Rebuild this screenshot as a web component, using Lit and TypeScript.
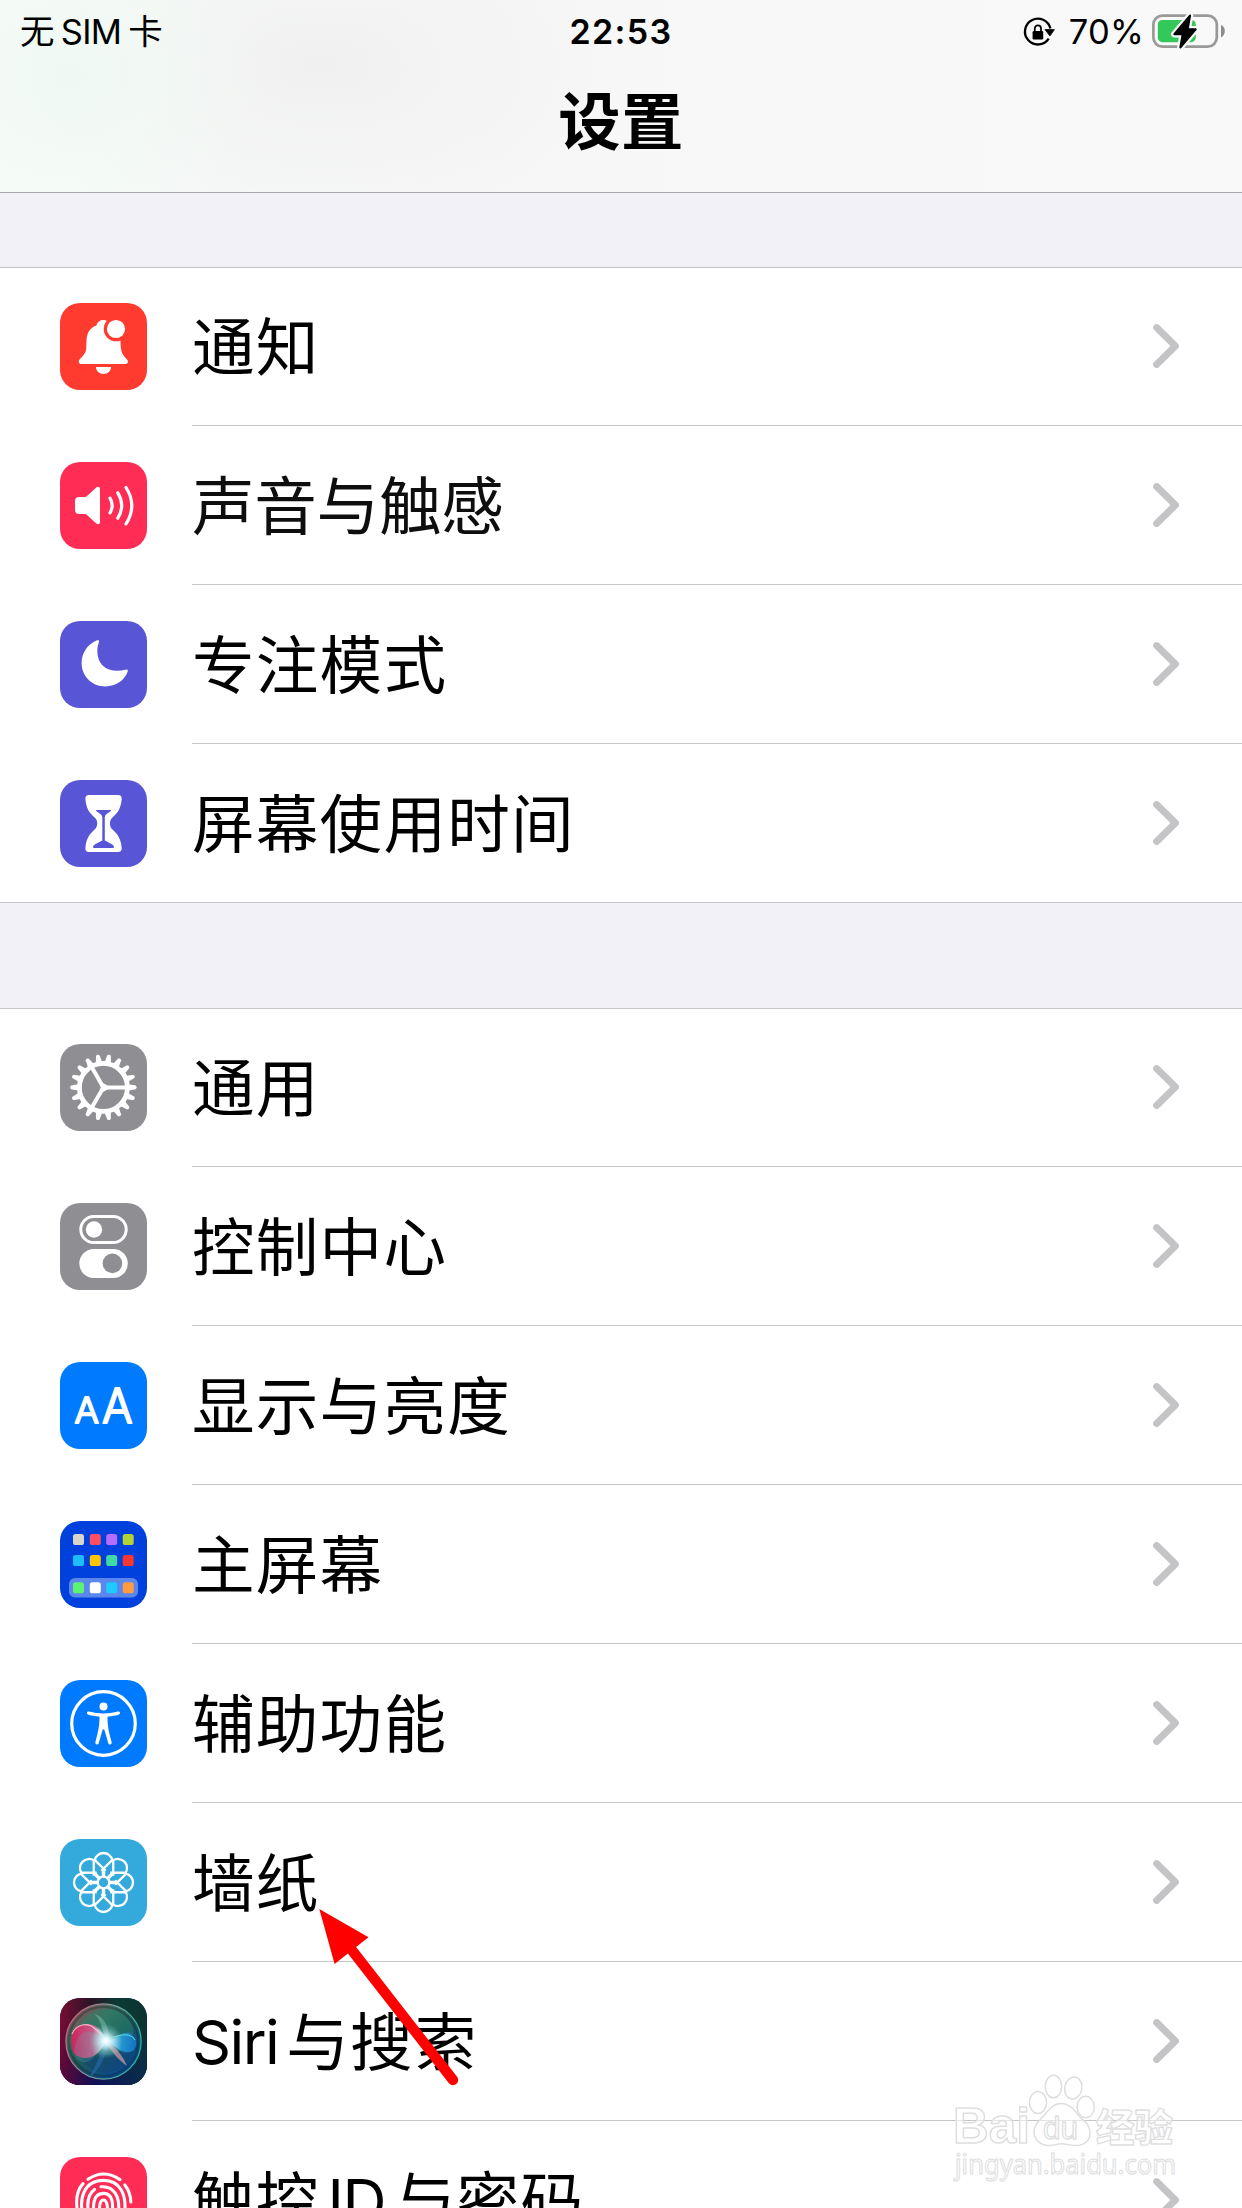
import { LitElement, html, svg, css, nothing, TemplateResult, SVGTemplateResult } from "lit";
import { customElement, property } from "lit/decorators.js";
import { classMap } from "lit/directives/class-map.js";

type Part = { text: string; latin?: boolean };
type Item = { icon: string; label: Part[]; tight?: boolean };

const t = (text: string): Part[] => [{ text }];

const GROUPS: Item[][] = [
  [
    { icon: "bell", label: t("通知") },
    { icon: "sound", label: t("声音与触感"), tight: true },
    { icon: "focus", label: t("专注模式") },
    { icon: "hourglass", label: t("屏幕使用时间") },
  ],
  [
    { icon: "gear", label: t("通用") },
    { icon: "control", label: t("控制中心") },
    { icon: "display", label: t("显示与亮度") },
    { icon: "home", label: t("主屏幕") },
    { icon: "access", label: t("辅助功能") },
    { icon: "wallpaper", label: t("墙纸") },
    { icon: "siri", label: [{ text: "Siri", latin: true }, { text: "与搜索" }] },
    { icon: "touch", label: [{ text: "触控" }, { text: "ID", latin: true }, { text: "与密码" }] },
  ],
];

const range = (n: number) => Array.from({ length: n }, (_, i) => i);

const TILE: Record<string, string> = {
  bell: "#ff3b30",
  sound: "#ff2d55",
  focus: "#5856d6",
  hourglass: "#5856d6",
  gear: "#8e8e93",
  control: "#8e8e93",
  display: "#007aff",
  home: "#0040dd",
  access: "#007aff",
  wallpaper: "#34aadc",
  siri: "#12203a",
  touch: "#ff2d55",
};

const HOME_DOTS = [
  ["#d9d5cc", "#ff4f64", "#b56dff", "#b2d235"],
  ["#1cbffa", "#ffc400", "#40d9a3", "#fb362e"],
  ["#5cf272", "#ffffff", "#1dcbff", "#ff9c40"],
];

const GLYPH: Record<string, () => SVGTemplateResult> = {
  bell: () => svg`
    <path fill="#fff" d="M21.5 61C18.6 61 18 58.2 19.8 56.2C23.5 52.2 25.8 50 26.2 46C26.8 39 25.6 33 29.5 27.5C31.5 24.6 34 23.3 36.4 22.4C37.4 19 40 17 43.3 17C46.6 17 49.3 19 50.3 22.4C57.5 25 60.3 31 60.5 38C60.7 48 61.5 51 66.8 56.2C68.8 58.2 68.2 61 65.2 61Z"/>
    <circle cx="56" cy="26" r="12.3" fill="#ff3b30"/>
    <circle cx="56" cy="26" r="9.1" fill="#fff"/>
    <path fill="#fff" d="M36 64H51C51 68 47.8 71 43.5 71S36 68 36 64Z"/>`,
  sound: () => svg`
    <path fill="#fff" d="M19 35H24.5C25.6 35 26.3 34.6 27 34L36.3 25.5C37.8 24.2 40 24.8 40 27V60C40 62.2 37.8 62.9 36.3 61.5L27 53C26.3 52.3 25.6 52 24.5 52H19C16.5 52 15 50.5 15 48V39C15 36.5 16.5 35 19 35Z"/>
    <g fill="none" stroke="#fff" stroke-width="3.2" stroke-linecap="round">
      <path d="M50 36.2Q54.4 43.5 50 50.8"/>
      <path d="M57.8 30.8Q65.6 43.5 57.8 56.2"/>
      <path d="M66 25.5Q77.6 43.5 66 62"/>
    </g>`,
  focus: () => svg`
    <path fill="#fff" d="M36.5 19.6C27.5 23.4 21.6 32 21.6 42C21.6 55.4 32 65.4 45.4 65.4C55.8 65.4 64.5 59.6 67.7 50.6C68.2 49 67 48.2 65.5 48.7C50 52.6 37.3 46 37.3 30C37.3 26.6 38 23.6 38.9 21.2C39.5 19.4 38.4 18.8 36.5 19.6Z"/>`,
  hourglass: () => svg`
    <path fill="#fff" d="M29 15H58C60.6 15 61.9 16.6 61.7 19C61 28.5 57.5 33 52.5 37.5C50.5 39.3 50 41.2 50 43.5S50.5 47.7 52.5 49.5C57.5 54 61 58.5 61.7 68C61.9 70.4 60.6 72 58 72H29C26.4 72 25.2 70.4 25.4 68C26 58.5 29.6 54 34.6 49.5C36.6 47.7 37.2 45.8 37.2 43.5S36.6 39.3 34.6 37.5C29.6 33 26 28.5 25.4 19C25.2 16.6 26.4 15 29 15Z"/>
    <path fill="#5856d6" d="M36 30H51C51.4 32.4 44.8 33 44.8 37.5V60.5L51.5 64C53.3 65 54 66 54 67.3C54 68 53.4 68 52.5 68H34.5C33.6 68 33 68 33 67.3C33 66 33.8 65 35.6 64L42.3 60.5V37.5C42.3 33 35.6 32.4 36 30Z"/>`,
  gear: () => svg`
    <g fill="#fff">
      ${range(18).map(
        (i) => svg`<path transform="rotate(${i * 20} 43.4 43.4)" d="M75.8 41.6L76.8 43.4L75.8 45.2L67.5 46.8V40Z"/>`
      )}
    </g>
    <circle cx="43.4" cy="43.4" r="24" fill="none" stroke="#fff" stroke-width="4.8"/>
    <g stroke="#fff" stroke-width="4">
      <path d="M43.4 43.4H66M43.4 43.4L32.1 23.8M43.4 43.4L32.1 63" />
    </g>
    <path fill="#fff" d="M47.5 41.4V45.4L43.1 47.9L39.6 45.9L41 43.4L39.6 40.9L43.1 38.9Z"/>`,
  control: () => svg`
    <rect x="20.8" y="13.5" width="45.4" height="26" rx="13" fill="none" stroke="#fff" stroke-width="3"/>
    <circle cx="34" cy="26.5" r="8.2" fill="#fff"/>
    <rect x="19.3" y="46" width="48.5" height="29" rx="14.5" fill="#fff"/>
    <circle cx="52.4" cy="60.4" r="9.8" fill="#8e8e93"/>`,
  display: () => svg`
    <g class="letters">
      <text x="14.6" y="60.8" font-size="36" textLength="24.4" lengthAdjust="spacingAndGlyphs">A</text>
      <text x="42" y="60.8" font-size="47.5" textLength="30.6" lengthAdjust="spacingAndGlyphs">A</text>
    </g>`,
  home: () => svg`
    <rect x="9" y="57" width="69" height="19.6" rx="6" fill="#5b86ec"/>
    ${HOME_DOTS.map((row, r) =>
      row.map(
        (c, i) => svg`<rect x=${[13, 29.8, 46.2, 62.7][i]} y=${[13, 34, 61.3][r]} width="11" height="11" rx="2.6" fill=${c}/>`
      )
    )}`,
  access: () => svg`
    <circle cx="43.5" cy="43.5" r="31.8" fill="none" stroke="#fff" stroke-width="3.2"/>
    <circle cx="43.5" cy="26.5" r="4" fill="#fff"/>
    <path fill="#fff" d="M29 31.6C34 33 38.5 33.4 43.5 33.4S53 33 58 31.6C60.2 31 60.9 34 58.6 34.7C55 35.7 52 36.1 48.4 36.4C47.6 36.5 47.5 37 47.5 37.8C47.6 48 49.5 54 51.6 62C52.3 64.7 49 65.6 48.2 63L44.6 50.4C44.2 49 42.8 49 42.4 50.4L38.8 63C38 65.6 34.7 64.7 35.4 62C37.5 54 39.4 48 39.5 37.8C39.5 37 39.4 36.5 38.6 36.4C35 36.1 32 35.7 28.4 34.7C26.1 34 26.8 31 29 31.6Z"/>`,
  wallpaper: () => svg`
    <g fill="none" stroke="#fff" stroke-width="2.3">
      ${range(8).map(
        (i) => svg`<g transform="rotate(${i * 45} 43.5 43.5)">
          <path d="M34.6 21.2A9.1 9.1 0 0 1 52.4 21.2"/>
          <path d="M34.4 20.6L45.6 31.8M52.6 20.6L41.4 31.8"/>
          <path stroke-width="3.4" d="M43.500 30V37.500"/>
        </g>`
      )}
      <circle cx="43.5" cy="43.5" r="5.8"/>
    </g>`,
  siri: () => svg`
    <defs>
      <linearGradient id="sa" x1="0" y1="0" x2="1" y2="0"><stop offset="0" stop-color="#780c34"/><stop offset=".35" stop-color="#2c1426"/><stop offset=".65" stop-color="#0b3a35"/><stop offset="1" stop-color="#0c342f"/></linearGradient>
      <linearGradient id="sb" x1="0" y1="0" x2="1" y2="0"><stop offset="0" stop-color="#5a0838"/><stop offset=".4" stop-color="#101058"/><stop offset="1" stop-color="#0a2c50"/></linearGradient>
      <linearGradient id="sm" x1="0" y1="0" x2="0" y2="1"><stop offset=".3" stop-color="#000"/><stop offset="1" stop-color="#fff"/></linearGradient>
      <mask id="mk"><rect width="87" height="87" fill="url(#sm)"/></mask>
      <linearGradient id="so" x1=".1" y1=".1" x2=".75" y2=".9"><stop offset="0" stop-color="#8d5058"/><stop offset=".3" stop-color="#3f6c60"/><stop offset=".55" stop-color="#20585a"/><stop offset="1" stop-color="#0c4a92"/></linearGradient>
      <linearGradient id="sr" x1="0" y1=".3" x2="1" y2=".6"><stop offset="0" stop-color="#c8607c"/><stop offset=".5" stop-color="#7d9f9a"/><stop offset="1" stop-color="#26b596"/></linearGradient>
      <radialGradient id="sg"><stop offset="0" stop-color="#fff"/><stop offset=".25" stop-color="#e8fbff" stop-opacity=".95"/><stop offset="1" stop-color="#8adfe8" stop-opacity="0"/></radialGradient>
      <linearGradient id="sp" x1="0" y1="0" x2="1" y2="0"><stop offset="0" stop-color="#e8185c"/><stop offset=".6" stop-color="#e0588c"/><stop offset="1" stop-color="#fff"/></linearGradient>
      <linearGradient id="sc" x1="0" y1="0" x2="1" y2="0"><stop offset="0" stop-color="#d8f8ff"/><stop offset=".5" stop-color="#249ce0"/><stop offset="1" stop-color="#1479cc"/></linearGradient>
    </defs>
    <rect width="87" height="87" fill="url(#sa)"/>
    <rect width="87" height="87" fill="url(#sb)" mask="url(#mk)"/>
    <circle cx="43.5" cy="43.5" r="37.6" fill="url(#so)" stroke="url(#sr)" stroke-width="1.3"/>
    <ellipse cx="46" cy="34" rx="27" ry="23" fill="#24886a" opacity=".45"/>
    <path d="M17 30C22 70 62 66 78 44C72 74 44 80 30 70C20 62 13 44 17 30Z" fill="#10436c" opacity=".45"/>
    <circle cx="43.5" cy="43.5" r="34.6" fill="none" stroke="#07282c" stroke-width="2.4" opacity=".35"/>
    <path d="M12 50C9 34 17 25 29 26C38 27 44 36 47 43C40 55 32 61 24 60C17 59 13 56 12 50Z" fill="url(#sp)" opacity=".85"/>
    <path d="M18 40C24 30 36 32 46 43C38 52 34 66 22 64C14 62 12 50 18 40Z" fill="#58b4c0" opacity=".22"/>
    <path d="M12 36C16 26 28 24 34 30C40 35 44 38 47 43" fill="none" stroke="#ffd5e2" stroke-width="1.2" opacity=".8"/>
    <path d="M46 43C56 42 61 33 69 35C78 38 79 52 70 54C61 56 54 47 46 43Z" fill="url(#sc)" opacity=".85"/>
    <path d="M46 43C58 36 70 34 75 42" fill="none" stroke="#60ddd6" stroke-width="1"/>
    <path d="M46 42C42 30 40 20 34 16C44 18 50 30 49 42Z" fill="#9ad0c0" opacity=".4"/>
    <path d="M45 43C40 60 34 70 29 80C40 72 47 56 49 43Z" fill="#2e76c0" opacity=".45"/>
    <path d="M48 43C56 50 63 58 67 68C58 62 51 52 46 45Z" fill="#d998a8" opacity=".7"/>
    <circle cx="46" cy="43" r="17" fill="url(#sg)" opacity=".8"/>
    <circle cx="46" cy="43" r="10" fill="url(#sg)"/>`,
  touch: () => svg`
    <g fill="none" stroke="#fff" stroke-width="3.1" stroke-linecap="round">
      <path d="M28 22.3Q43.5 11.5 60 22.6"/>
      <path d="M64.8 28Q70.5 35 70.8 45"/>
      <path d="M23 26.6Q14.5 36 17.3 53"/>
      <path d="M23.4 60C18 40 25 23.4 43.5 23.4C60 23.4 67 37 64.6 58"/>
      <path d="M34.5 32.5Q25.5 39 28.6 56L30 65"/>
      <path d="M41 29.8C54 28.6 60.5 40 58.3 56L57 68"/>
      <path d="M35 66C32 48 33 36.4 43.5 36.4C53 36.4 53.5 46 52 62"/>
      <path d="M46.8 70C48 56 48.6 43 43.5 43C38.4 43 39 54 40.6 68"/>
    </g>`,
};

@customElement("settings-icon")
export class SettingsIcon extends LitElement {
  @property() name = "";

  static styles = css`
    :host { display: block; width: 87px; height: 87px; flex: none; }
    .tile { display: block; width: 87px; height: 87px; border-radius: 20px; overflow: hidden; }
    .letters { font-family: Inter, "Liberation Sans", sans-serif; font-weight: 300; fill: #fff; stroke: #fff; stroke-width: 2px; stroke-linejoin: round; }
  `;

  render() {
    return html`<svg class="tile" viewBox="0 0 87 87" aria-hidden="true">
      <rect width="87" height="87" fill=${TILE[this.name]}></rect>
      ${GLYPH[this.name]?.() ?? nothing}
    </svg>`;
  }
}

@customElement("status-bar")
export class StatusBar extends LitElement {
  static styles = css`
    :host { display: grid; grid-template-columns: 1fr auto 1fr; align-items: center; height: 63px; padding: 0 16px;
      font: 400 34.5px/63px Inter, "Noto Sans CJK SC", sans-serif; color: #000; }
    .carrier { display: flex; gap: 7px; letter-spacing: -.7px; padding-left: 4px; }
    .time { font-weight: 600; font-size: 34px; letter-spacing: 1.4px; }
    .right { display: flex; justify-content: flex-end; align-items: center; }
    .lock { width: 34px; height: 34px; margin-right: 14px; }
    .pct { letter-spacing: .2px; margin-right: 8px; }
    .battery { width: 74px; height: 40px; flex: none; margin-top: -2px; }
  `;

  render() {
    return html`
      <div class="carrier"><span>无</span><span>SIM</span><span>卡</span></div>
      <div class="time">22:53</div>
      <div class="right">
        <svg class="lock" viewBox="0 0 34 34">
          <path d="M27.7 23.6A12.9 12.9 0 1 1 29.4 13.5" fill="none" stroke="#000" stroke-width="2.3"/>
          <path d="M24 14.6H33.4L28.9 21Z" stroke="#000" stroke-width=".8" stroke-linejoin="round"/>
          <rect x="11.6" y="16" width="10.6" height="8.4" rx="1.2"/>
          <path d="M13.8 16.4V13.6C13.8 9.2 20 9.2 20 13.6V16.4" fill="none" stroke="#000" stroke-width="1.7"/>
        </svg>
        <span class="pct">70%</span>
        <svg class="battery" viewBox="0 0 74 40">
          <rect x="1.4" y="4.6" width="63.4" height="31" rx="9" fill="none" stroke="#999" stroke-width="2.7"/>
          <path d="M69 14Q72.8 15.6 72.8 20T69 26.4Z" fill="#8d8d8d"/>
          <rect x="5.8" y="9" width="38" height="22.2" rx="4.6" fill="#34c759"/>
          <path d="M38 4.6L22.4 23.2H30.8L28.4 36.4L43.6 18.4H35.6Z" stroke="#f8f8f8" stroke-width="6.6" stroke-linejoin="round" fill="#f8f8f8"/>
          <path d="M38 4.6L22.4 23.2H30.8L28.4 36.4L43.6 18.4H35.6Z" stroke="#000" stroke-width="2.2" stroke-linejoin="round"/>
        </svg>
      </div>`;
  }
}

@customElement("settings-row")
export class SettingsRow extends LitElement {
  @property({ attribute: false }) item!: Item;
  @property({ type: Boolean }) last = false;

  static styles = css`
    :host { display: flex; height: 159px; padding-left: 60px; box-sizing: border-box; align-items: stretch; }
    .icon { align-self: center; }
    .body { flex: 1; margin-left: 45px; box-sizing: border-box; border-bottom: 1px solid #c6c6c8; display: flex; align-items: center; padding-right: 62px; }
    .body.last { border-bottom-color: transparent; }
    .label { flex: 1; display: flex; gap: 8px; white-space: nowrap; padding-top: 2px; font: 400 62.6px/90px Inter, "Noto Sans CJK SC", sans-serif; letter-spacing: 1.2px; color: #000; }
    .label.tight { letter-spacing: -.3px; color: #0e0e0e; }
    .latin { font-size: 61px; letter-spacing: -1.6px; }
    .chevron { width: 28px; height: 46px; flex: none; }
  `;

  render() {
    const { icon, label, tight } = this.item;
    return html`
      <settings-icon class="icon" name=${icon}></settings-icon>
      <div class=${classMap({ body: true, last: this.last })}>
        <div class=${classMap({ label: true, tight: !!tight })}>
          ${label.map((p) => html`<span class=${classMap({ latin: !!p.latin })}>${p.text}</span>`)}
        </div>
        <svg class="chevron" viewBox="0 0 28 46"><path d="M4.6 4.6L23.4 23L4.6 41.4" fill="none" stroke="#c4c4c6" stroke-width="7" stroke-linecap="round" stroke-linejoin="round"/></svg>
      </div>`;
  }
}

@customElement("app-root")
export class AppRoot extends LitElement {
  static styles = css`
    :host { display: block; position: relative; width: 1242px; height: 2208px; overflow: hidden; background: #f2f1f7; }
    .header { height: 193px; box-sizing: border-box; border-bottom: 1px solid #a9a9ae;
      background:
        radial-gradient(ellipse 190px 170px at 70px 75px, #eff9f3 0, rgba(242, 250, 245, 0.6) 45%, rgba(247, 250, 248, 0) 100%),
        radial-gradient(ellipse 300px 170px at 320px 65px, #f0f0f0 0, rgba(248, 248, 248, 0) 100%),
        linear-gradient(90deg, #f6fbf8 0, #f7f7f7 40%, #f9f9f9 100%); }
    .title { margin: 0; text-align: center; font: 700 62.4px/90px Inter, "Noto Sans CJK SC", sans-serif; padding-top: 15px; letter-spacing: .3px; }
    .group { background: #fff; border-top: 1px solid #c6c6c8; margin-top: 105px; }
    .group:first-of-type { margin-top: 74px; }
    .group.closed { border-bottom: 1px solid #c6c6c8; }
    .first { margin-top: -1px; }
    .lastrow { margin-bottom: -1px; }
    .overlay { position: absolute; left: 0; top: 0; pointer-events: none; }
    .mark text { fill: #fff; fill-opacity: .55; stroke: #dedee0; stroke-width: 1.5px; stroke-linejoin: round; }
    .mark .latin { font: 700 50px "Liberation Sans", sans-serif; }
    .mark .du { font: 400 32px "Liberation Sans", sans-serif; stroke-width: 1.3px; }
    .mark .cjk { font: 900 38px "Noto Sans CJK SC", sans-serif; stroke-width: 1.3px; }
    .mark .url { font: 400 28px "Noto Sans", sans-serif; stroke-width: 1.1px; }
  `;

  private group(items: Item[], closed: boolean): TemplateResult {
    return html`<section class=${classMap({ group: true, closed })}>
      ${items.map(
        (item, i) => html`<settings-row
          class=${classMap({ first: i === 0, lastrow: closed && i === items.length - 1 })}
          .item=${item}
          ?last=${closed && i === items.length - 1}
        ></settings-row>`
      )}
    </section>`;
  }

  render() {
    return html`
      <header class="header">
        <status-bar></status-bar>
        <h1 class="title">设置</h1>
      </header>
      <main>
        ${this.group(GROUPS[0], true)} ${this.group(GROUPS[1], false)}
      </main>
      <svg class="overlay" width="1242" height="2208" viewBox="0 0 1242 2208">
        <g class="mark">
          <text class="latin" x="953" y="2143" textLength="77" lengthAdjust="spacingAndGlyphs">Bai</text>
          <g fill="#fff" fill-opacity=".55" stroke="#dedee0" stroke-width="1.5">
            <ellipse cx="1038" cy="2102.5" rx="8.6" ry="11"/>
            <ellipse cx="1053.5" cy="2086.5" rx="8.2" ry="11.3"/>
            <ellipse cx="1073.3" cy="2088" rx="8.6" ry="11" transform="rotate(12 1073.3 2088)"/>
            <ellipse cx="1085.7" cy="2107" rx="8.6" ry="10.8"/>
            <path d="M1061.5 2103.5C1070 2103.5 1075 2111 1080 2117C1085 2121.5 1090 2125 1090 2133C1090 2141 1084 2145.5 1076 2145.5C1071 2145.5 1066 2143.8 1061.5 2143.8C1057 2143.8 1054 2145.5 1049 2145.5C1040 2145.5 1034 2139 1034 2132C1034 2124 1040 2120 1044.5 2115C1049 2109.5 1053 2103.5 1061.5 2103.5Z"/>
          </g>
          <text class="du" x="1043" y="2138.5" textLength="35" lengthAdjust="spacingAndGlyphs">du</text>
          <text class="cjk" x="1096" y="2140.5" textLength="77" lengthAdjust="spacingAndGlyphs">经验</text>
          <text class="url" x="955" y="2173.5" textLength="221" lengthAdjust="spacingAndGlyphs">jingyan.baidu.com</text>
        </g>
        <path d="M351 1949L453 2080" stroke="#f00" stroke-width="10.4" stroke-linecap="round"/>
        <path d="M319.3 1909L368.5 1937.2L334.6 1964Z" fill="#f00"/>
      </svg>`;
  }
}
